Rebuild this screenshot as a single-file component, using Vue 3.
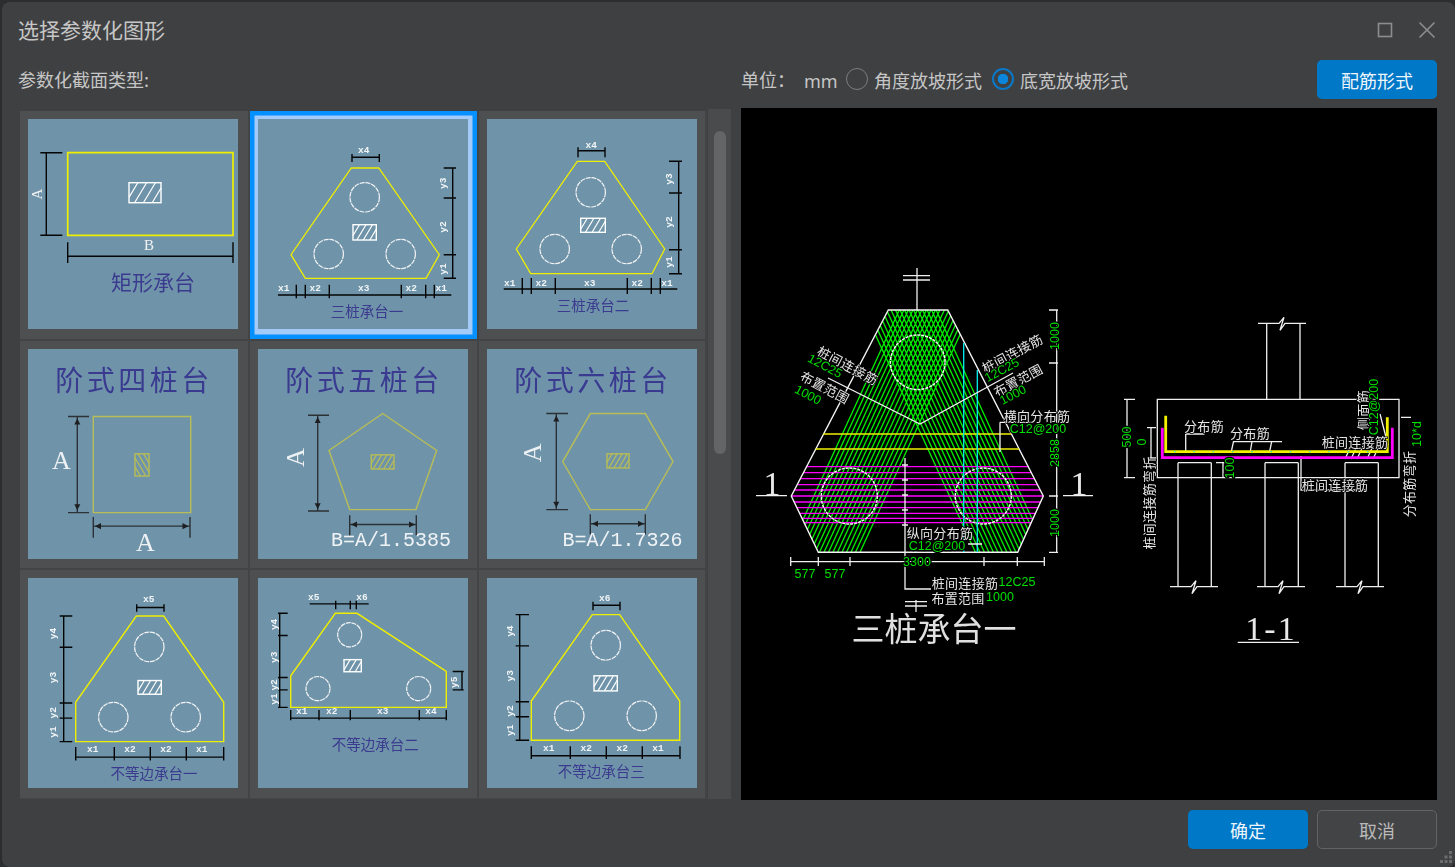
<script setup>
const YEL = '#eeee00'
const OLV = '#b8bd55'
const BLK = '#050505'
const DGR = '#2c3135'
const pts = a => a.map(p => p.join(',')).join(' ')
const hdim = (y, xs, t1, t2, x0, x1) =>
  `M${x0 ?? xs[0]} ${y}H${x1 ?? xs[xs.length - 1]}` + xs.map(x => `M${x} ${t1}V${t2}`).join('')
const vdim = (x, ys, t1, t2) =>
  `M${x} ${ys[0]}V${ys[ys.length - 1]}` + ys.map(y => `M${t1} ${y}H${t2}`).join('')
const hatch = (x, y, w, h, n, back) => {
  let d = ''
  const dx = h * 0.6
  const step = (w + dx) / (n + 1)
  for (let i = 1; i <= n; i++) {
    const s = x - dx + step * i
    let ax = s, ay = y + h, bx = s + dx, by = y
    if (ax < x) { ay = y + h - (x - ax) / 0.6; ax = x }
    if (bx > x + w) { by = y + (bx - x - w) / 0.6; bx = x + w }
    if (back) {
      const ma = 2 * x + w - ax, mb = 2 * x + w - bx
      d += `M${ma} ${ay}L${mb} ${by}`
    } else d += `M${ax} ${ay}L${bx} ${by}`
  }
  return d
}
const arrowsH = (y, a, b) =>
  `M${a} ${y}l6 -3v6zM${b} ${y}l-6 -3v6z`
const arrowsV = (x, a, b) =>
  `M${x} ${a}l-3 6h6zM${x} ${b}l-3 -6h6z`
const small = (x, y, t, rot) => ({ x, y, t, rot, c: 'small' })

const cards = [
  {
    h: 210, poly: [[39.7, 33.7], [205, 33.7], [205, 116.3], [39.7, 116.3]], col: YEL, pw: 1.7,
    hatch: [101, 63.7, 32, 20, 4, false, '#fff'],
    lines: [vdim(18.3, [33.7, 116.3], 12.3, 34.3), hdim(137.3, [39.7, 205], 123.3, 144)],
    texts: [
      { x: 8.5, y: 75, t: 'A', rot: -90, c: 'mid' }, { x: 121, y: 126, t: 'B', c: 'mid' },
      { x: 125, y: 162, t: '矩形承台', c: 'cap big' }
    ]
  },
  {
    h: 210, poly: [[93.3, 49], [120.7, 49], [181.3, 135.7], [168, 159.3], [47.3, 159.3], [33, 135.7]], col: YEL, pw: 1.3,
    circles: [[106.7, 78.3, 14.7], [70.7, 135, 14.7], [142.7, 135, 14.7]],
    hatch: [95, 105.7, 23.3, 15.3, 4, false, '#fff'],
    lines: [hdim(38.3, [94, 121.3], 35, 43), vdim(194.7, [49, 79, 135.7, 159.3], 185.7, 198),
      hdim(176, [38.3, 47.3, 71.3, 143.3, 167.7, 176.3], 165.7, 179.3, 20, 193.3)],
    texts: [small(105.7, 31, 'x4'), small(185.7, 64.3, 'y3', -90), small(185.7, 108, 'y2', -90), small(185.7, 150, 'y1', -90),
      small(25.7, 169, 'x1'), small(57.3, 169, 'x2'), small(105.7, 169, 'x3'), small(153.3, 169, 'x2'), small(183.3, 169, 'x1'),
      { x: 109, y: 191.7, t: '三桩承台一', c: 'cap' }]
  },
  {
    h: 210, poly: [[90.3, 42.3], [117.7, 42.3], [177.7, 130], [165, 154.7], [43.7, 154.7], [29.3, 130]], col: YEL, pw: 1.3,
    circles: [[103.7, 73.3, 14.7], [67.7, 130, 14.7], [139.7, 130, 14.7]],
    hatch: [93.7, 99.3, 24.6, 14, 4, false, '#fff'],
    lines: [hdim(31.7, [91, 118], 28.3, 38.3), vdim(191.7, [42.3, 74, 130.7, 154.7], 182, 195),
      hdim(170, [35.3, 44.3, 68.3, 140.3, 164.3, 173.3], 159, 175, 16.7, 190.3)],
    texts: [small(104.3, 26, 'x4'), small(182.7, 60, 'y3', -90), small(182.7, 103, 'y2', -90), small(182.7, 143, 'y1', -90),
      small(22.7, 164.3, 'x1'), small(54.3, 164.3, 'x2'), small(102.7, 164.3, 'x3'), small(150.3, 164.3, 'x2'), small(180, 164.3, 'x1'),
      { x: 106, y: 185.7, t: '三桩承台二', c: 'cap' }]
  },
  {
    h: 208.3, poly: [[65.3, 67], [162.7, 67], [162.7, 162.3], [65.3, 162.3]], col: OLV, pw: 1.4, dim: DGR,
    hatch: [107, 104, 14, 22, 4, true, OLV],
    lines: [vdim(49.3, [67, 162.3], 40, 61), hdim(175.7, [65.3, 162], 166.7, 187.3)],
    fills: arrowsV(49.3, 69, 160) + arrowsH(175.7, 67, 160.5),
    texts: [{ x: 106, y: 28.8, t: '阶式四桩台', c: 'cap head' }, { x: 33.3, y: 111, t: 'A', c: 'large' }, { x: 117.3, y: 191.7, t: 'A', c: 'large' }]
  },
  {
    h: 208.3, poly: [[124.7, 64], [178.7, 100.7], [158, 159.3], [91.7, 159.3], [71, 100.7]], col: OLV, pw: 1.4, dim: DGR,
    hatch: [113.3, 105, 22.7, 14, 5, false, OLV],
    lines: [vdim(59.7, [65.7, 160.7], 50, 71), hdim(174, [91.7, 158.3], 165, 185)],
    fills: arrowsV(59.7, 67.5, 159) + arrowsH(174, 93, 157),
    texts: [{ x: 106, y: 28.8, t: '阶式五桩台', c: 'cap head' }, { x: 37.3, y: 107.7, t: 'A', rot: -90, c: 'large' }, { x: 133, y: 190, t: 'B=A/1.5385', c: 'mono' }]
  },
  {
    h: 208.3, poly: [[103.3, 64], [158.3, 64], [186, 111.7], [158.3, 159.3], [103.3, 159.3], [75.7, 111.7]], col: OLV, pw: 1.4, dim: DGR,
    hatch: [120, 104, 22, 14, 5, false, OLV],
    lines: [vdim(69.3, [64, 159.3], 59.3, 81), hdim(173.3, [103.3, 158.3], 164, 184)],
    fills: arrowsV(69.3, 66, 157.5) + arrowsH(173.3, 105, 157),
    texts: [{ x: 106, y: 28.8, t: '阶式六桩台', c: 'cap head' }, { x: 46, y: 103, t: 'A', rot: -90, c: 'large' }, { x: 135.5, y: 190, t: 'B=A/1.7326', c: 'mono' }]
  },
  {
    h: 208.3, poly: [[108.3, 37.7], [135.7, 37.7], [195.7, 123.3], [195.7, 162.3], [47.7, 162.3], [47.7, 123.3]], col: YEL, pw: 1.4,
    circles: [[121.3, 68.3, 14.7], [85.3, 138, 14.7], [157.7, 138, 14.7]],
    hatch: [110, 101.7, 23.3, 13.6, 4, false, '#fff'],
    lines: [hdim(29.3, [108.7, 136], 26, 33.5), vdim(35.7, [37.7, 68.7, 124, 139, 162.3], 31.7, 44.3),
      hdim(177.7, [47.7, 86.3, 122.3, 158.3, 195.7], 167.7, 181)],
    texts: [small(120.7, 21.7, 'x5'), small(26, 55, 'y4', -90), small(26, 98.7, 'y3', -90), small(26, 133.7, 'y2', -90), small(26, 152.7, 'y1', -90),
      small(64.7, 170.3, 'x1'), small(102, 170.3, 'x2'), small(138, 170.3, 'x2'), small(173.7, 170.3, 'x1'),
      { x: 126, y: 192.7, t: '不等边承台一', c: 'cap' }]
  },
  {
    h: 208.3, poly: [[77.3, 35], [99, 35], [188.3, 92.7], [188.3, 128.3], [32.7, 128.3], [32.7, 97]], col: YEL, pw: 1.4,
    circles: [[91.7, 56.3, 12], [60, 109.7, 12], [160.7, 109.7, 12]],
    hatch: [86, 81, 17.3, 12, 3, false, '#fff'],
    lines: [hdim(25.7, [77.7, 92.3, 98.3], 22.5, 31, 51.7, 110.7), vdim(21.7, [35, 57, 98.7, 111, 128.3], 20, 29.7),
      vdim(204, [92.7, 111], 194.7, 205.7), hdim(139, [32.7, 61, 92.3, 161.3, 188.3], 131, 141)],
    texts: [small(55.7, 19.3, 'x5'), small(104, 19.3, 'x6'), small(16.3, 46, 'y4', -90), small(16.3, 78.7, 'y3', -90), small(16.3, 106, 'y2', -90), small(16.3, 120, 'y1', -90),
      small(196.3, 103.3, 'y5', -90), small(43.7, 132.3, 'x1'), small(73.7, 132.3, 'x2'), small(124.7, 132.3, 'x3'), small(173, 132.3, 'x4'),
      { x: 117.3, y: 163.7, t: '不等边承台二', c: 'cap' }]
  },
  {
    h: 208.3, poly: [[105.3, 36.3], [132.7, 36.3], [192.7, 122], [192.7, 161], [44.3, 161], [44.3, 122]], col: YEL, pw: 1.4,
    circles: [[118.7, 66.7, 14.7], [82.3, 136.7, 14.7], [154.7, 136.7, 14.7]],
    hatch: [107, 97, 23.3, 15, 4, false, '#fff'],
    lines: [hdim(27, [106, 133], 23.5, 32), vdim(32.7, [36.3, 67.3, 122.7, 137.7, 161], 28.7, 42),
      hdim(176.3, [44.3, 83.3, 119.3, 155.3, 193], 167, 179.5)],
    texts: [small(117.7, 20, 'x6'), small(23.7, 52.7, 'y4', -90), small(23.7, 97, 'y3', -90), small(23.7, 132, 'y2', -90), small(23.7, 151, 'y1', -90),
      small(61.7, 169, 'x1'), small(99.3, 169, 'x2'), small(135.3, 169, 'x2'), small(171, 169, 'x1'),
      { x: 114.3, y: 191, t: '不等边承台三', c: 'cap' }]
  }
].map((c, i) => {
  const [x, y, w, h, n, back, col] = c.hatch
  return { ...c, id: i, hatchBox: { x, y, w, h, col }, hatchD: hatch(x, y, w, h, n, back) }
})

const rot = t => (t.rot ? `rotate(${t.rot} ${t.x} ${t.y})` : undefined)

// Preview drawing, in page coordinates
const hexPts = '888.3,310 947.7,310 1043.3,496 1017.7,552.3 818.3,552.3 791.3,496'
const greens = []
for (let i = 0; i < 17; i++) {
  const xa = 788 + i * 4.5
  greens.push(`M${xa} 552.3L${xa + 0.46 * 260} 292`)
  const xb = 1835.4 - xa
  greens.push(`M${xb} 552.3L${xb - 0.46 * 260} 292`)
}
const greenD = greens.join('')
const magentaYs = [466.7, 472.7, 478.7, 484.7, 490, 496, 502, 507.7, 513.3, 518.3, 522.7]
const magentaD = magentaYs.map(y => `M780 ${y}H1050`).join('')
const leaderDots = [465, 480, 495, 510, 525].map(y => `M902 ${y}h6`).join('')
const bk = (x, y) => `M${x - 24} ${y}H${x - 3}l5 -6l-4 13l5 -7H${x + 24}`

const pvLabels = [
  { x: 848, y: 365, t: '桩间连接筋', rot: 28, c: 'pw' },
  { x: 825, y: 366, t: '12C25', rot: 28, c: 'pg' },
  { x: 825, y: 387, t: '布置范围', rot: 28, c: 'pw' },
  { x: 808, y: 395, t: '1000', rot: 28, c: 'pg' },
  { x: 1012, y: 353, t: '桩间连接筋', rot: -28, c: 'pw' },
  { x: 1002, y: 370, t: '12C25', rot: -28, c: 'pg' },
  { x: 1018, y: 380, t: '布置范围', rot: -28, c: 'pw' },
  { x: 1013, y: 395, t: '1000', rot: -28, c: 'pg' },
  { x: 1037, y: 415, t: '横向分布筋', c: 'pw' },
  { x: 1038, y: 429, t: 'C12@200', c: 'pg' },
  { x: 940, y: 532, t: '纵向分布筋', c: 'pw' },
  { x: 937, y: 546, t: 'C12@200', c: 'pg' },
  { x: 1055, y: 336, t: '1000', rot: -90, c: 'pg' },
  { x: 1055, y: 453, t: '2858', rot: -90, c: 'pg' },
  { x: 1055, y: 523, t: '1000', rot: -90, c: 'pg' },
  { x: 917, y: 562, t: '3300', c: 'pg' },
  { x: 805, y: 573.5, t: '577', c: 'pg' },
  { x: 835, y: 573.5, t: '577', c: 'pg' },
  { x: 965, y: 582, t: '桩间连接筋', c: 'pw' },
  { x: 1017, y: 582, t: '12C25', c: 'pg' },
  { x: 958, y: 597, t: '布置范围', c: 'pw' },
  { x: 1000, y: 597, t: '1000', c: 'pg' },
  { x: 934, y: 627, t: '三桩承台一', c: 'ptitle' },
  { x: 772, y: 483, t: '1', c: 'pone' },
  { x: 1079, y: 483, t: '1', c: 'pone' },
  { x: 1204, y: 425, t: '分布筋', c: 'pw' },
  { x: 1250, y: 432, t: '分布筋', c: 'pw' },
  { x: 1355, y: 441, t: '桩间连接筋', c: 'pw' },
  { x: 1335, y: 484, t: '桩间连接筋', c: 'pw' },
  { x: 1362, y: 410, t: '侧面筋', rot: -90, c: 'pw' },
  { x: 1374, y: 407, t: 'C12@200', rot: -90, c: 'pg' },
  { x: 1127, y: 437, t: '500', rot: -90, c: 'pg' },
  { x: 1142, y: 442, t: '0', rot: -90, c: 'pg' },
  { x: 1230, y: 468, t: '100', rot: -90, c: 'pg' },
  { x: 1417, y: 434, t: '10*d', rot: -90, c: 'pg' },
  { x: 1148, y: 503, t: '桩间连接筋弯折', rot: -90, c: 'pw' },
  { x: 1408, y: 484, t: '分布筋弯折', rot: -90, c: 'pw' },
  { x: 1271, y: 628, t: '1-1', c: 'pone wide' }
]
const whiteD = [
  'M917 268V310M903 275.7H930M903 280H930',
  'M905 601.7H927M905 606H927M916 600V612',
  'M756 495.7H787M1063 495.7H1093',
  'M1056.7 310V552.3M1049 310H1058M1049 363H1058M1049 496H1058M1049 552.3H1058',
  'M790.7 561.7H1044.3M790.7 557V566M818.3 557V566M850 557V566M984 557V566M1017.3 557V566M1044.3 557V566',
  'M828 378L920 424L1013 373',
  'M1000 422.3H1032M1000 422.3V452',
  'M905 458V589H931',
  leaderDots,
  'M968 544H982',
  bk(1282, 323.3),
  'M1266.7 323.3V399.3M1300 323.3V399.3',
  'M1157.3 399.3H1399V477.7H1157.3Z',
  'M1178 462.7H1211.3M1178 462.7V586.7M1211.3 462.7V586.7',
  'M1265 462.7H1298.3M1265 462.7V586.7M1298.3 462.7V586.7',
  'M1345 462.7H1378.3M1345 462.7V586.7M1378.3 462.7V586.7',
  bk(1194, 586.7), bk(1281, 586.7), bk(1360, 586.7),
  'M1127 399.3V477.7M1124 399.3H1135M1124 477.7H1135',
  'M1151 427.7V458M1147 427.7H1156M1147 458H1156',
  'M1223 462.7V477.7M1216 462.7H1227M1216 477.7H1227',
  'M1185.7 453V434H1204.5',
  'M1231 453L1233.5 441.7H1282M1250 453L1252 441.7M1269.3 453L1271.7 441.7',
  'M1301 456V490H1367',
  'M1345 459L1351 446M1351 459L1357 446M1357 459L1363 446M1367 459L1373 446M1373 459L1379 446',
  'M1380 414L1388 445',
  'M1401 417.3H1411',
  'M1237.7 642.3H1299'
].join('')
const cyanDots = []
for (let x = 1174; x < 1384; x += 19.3) cyanDots.push(`M${x} 451.7h1.5`)
const cyanD = cyanDots.join('')
</script>

<template>
  <div class="win">
    <header class="title">
      <span>选择参数化图形</span>
      <div class="ctrls">
        <svg class="ctl" width="16" height="16" viewBox="0 0 16 16"><rect x="1.5" y="1.5" width="13" height="13" /></svg>
        <svg class="ctl" width="18" height="18" viewBox="0 0 18 18"><path d="M1.5 1.5L16.5 16.5M16.5 1.5L1.5 16.5" /></svg>
      </div>
    </header>

    <section class="tools">
      <div class="lbl">参数化截面类型:</div>
      <div class="opts">
        <span class="unit">单位：</span>
        <span class="mm">mm</span>
        <label class="radio"><i class="dot"></i>角度放坡形式</label>
        <label class="radio on"><i class="dot"></i>底宽放坡形式</label>
        <button class="btn primary push">配筋形式</button>
      </div>
    </section>

    <main class="body">
      <div class="panel">
        <div class="grid">
          <div v-for="c in cards" :key="c.id" class="cell" :class="{ sel: c.id === 1 }">
            <div class="card">
              <svg class="art" width="210" height="210" :viewBox="`0 0 210 ${c.h}`" preserveAspectRatio="none">
                <polygon :points="pts(c.poly)" fill="none" :stroke="c.col" :stroke-width="c.pw" />
                <circle v-for="(o, i) in c.circles || []" :key="i" :cx="o[0]" :cy="o[1]" :r="o[2]" class="pile" />
                <rect :x="c.hatchBox.x" :y="c.hatchBox.y" :width="c.hatchBox.w" :height="c.hatchBox.h" fill="none" :stroke="c.hatchBox.col" stroke-width="1.4" />
                <path :d="c.hatchD" fill="none" :stroke="c.hatchBox.col" stroke-width="1.2" />
                <path v-for="(d, i) in c.lines" :key="i" :d="d" fill="none" :stroke="c.dim || BLK" stroke-width="1.4" />
                <path v-if="c.fills" :d="c.fills" fill="#1d1f20" />
                <text v-for="(t, i) in c.texts" :key="i" :x="t.x" :y="t.y" :transform="rot(t)" class="tx" :class="t.c" text-anchor="middle" dominant-baseline="central">{{ t.t }}</text>
              </svg>
            </div>
          </div>
        </div>
        <div class="track"><div class="thumb"></div></div>
      </div>

      <div class="preview">
        <svg class="art" width="696" height="692" viewBox="741 108 696 692">
          <defs>
            <clipPath id="hexclip"><polygon :points="hexPts" /></clipPath>
          </defs>
          <g clip-path="url(#hexclip)">
            <path :d="greenD" fill="none" stroke="#00f000" stroke-width="1.3" />
            <path :d="magentaD" fill="none" stroke="#ff00ff" stroke-width="1.3" />
          </g>
          <polygon :points="hexPts" fill="none" stroke="#f4f4f4" stroke-width="1.4" />
          <circle cx="917.7" cy="362.3" r="27.3" class="pile pv" />
          <circle cx="849.3" cy="496" r="28" class="pile pv" />
          <circle cx="983.3" cy="496" r="28" class="pile pv" />
          <path d="M823.3 434H1011M815.7 449H1019" stroke="#f0f000" stroke-width="1.6" fill="none" />
          <path d="M963.7 343V552M977.3 370V552" stroke="#00f0f0" stroke-width="1.3" fill="none" />
          <path :d="whiteD" fill="none" stroke="#f0f0f0" stroke-width="1.3" />
          <path d="M1162.3 427.7V457.7H1392.3V427.7" fill="none" stroke="#ff00ff" stroke-width="2.8" />
          <path d="M1165.7 415.7V451.7H1387.3V417.3" fill="none" stroke="#f2f200" stroke-width="2.8" />
          <path :d="cyanD" fill="none" stroke="#00e0e0" stroke-width="1" />
          <text v-for="(t, i) in pvLabels" :key="i" :x="t.x" :y="t.y" :transform="rot(t)" class="tx" :class="t.c" text-anchor="middle" dominant-baseline="central">{{ t.t }}</text>
        </svg>
      </div>
    </main>

    <footer class="foot">
      <button class="btn primary">确定</button>
      <button class="btn ghost">取消</button>
    </footer>

    <svg class="grip" width="14" height="14" viewBox="0 0 14 14">
      <path d="M10 1h3v3h-3zM5.5 5.5h3v3h-3zM10 5.5h3v3h-3zM1 10h3v3H1zM5.5 10h3v3h-3zM10 10h3v3h-3z" />
    </svg>
  </div>
</template>

<style>
html, body { margin: 0; background: #2c2d2f; overflow: hidden; }
</style>

<style scoped>
.win {
  position: relative;
  box-sizing: border-box;
  width: 1453px;
  height: 865px;
  margin: 2px 0 0 2px;
  padding: 0 18px;
  background: #3f4042;
  border-radius: 8px;
  display: flex;
  flex-direction: column;
  overflow: hidden;
  color: #c6c6c6;
  font-family: "Noto Sans CJK SC", "Noto Sans", sans-serif;
}
.title {
  height: 58px;
  flex: none;
  display: flex;
  align-items: center;
  justify-content: space-between;
  font-size: 21px;
  padding-bottom: 4px;
  box-sizing: border-box;
  margin-left: -2px;
}
.ctrls { display: flex; align-items: center; gap: 25px; margin: 2px 1px 0 0; }
.ctl { fill: none; stroke: #8d8d8d; stroke-width: 1.6; display: block; }
.tools {
  height: 39px;
  flex: none;
  display: grid;
  grid-template-columns: 711px 696px;
  column-gap: 10px;
  align-items: center;
}
.lbl { font-size: 18px; margin-left: -2px; line-height: 1; padding-bottom: 2px; }
.opts { display: flex; align-items: center; font-size: 18px; line-height: 1; }
.unit { width: 63px; flex: none; white-space: nowrap; padding-bottom: 2px; }
.mm { width: 42px; flex: none; font-size: 18px; font-family: "Noto Sans", sans-serif; padding-top: 2px; }
.radio { display: flex; align-items: center; gap: 6px; margin-right: 10px; }
.dot {
  box-sizing: border-box;
  width: 22px;
  height: 22px;
  border-radius: 50%;
  border: 1.5px solid #7c7d7f;
  display: block;
  margin-top: -2px;
}
.on .dot { border: 2px solid #0a78c6; background: radial-gradient(circle, #0a86dc 0 5px, transparent 5.5px); }
.btn {
  width: 120px;
  height: 39px;
  box-sizing: border-box;
  border-radius: 5px;
  border: 0;
  font: inherit;
  font-size: 18px;
  padding: 0;
  display: block;
}
.primary { background: #0078c8; color: #eef6fc; }
.ghost { background: #434446; border: 1.5px solid #626365; color: #b9b9b9; }
.push { margin-left: auto; }
.body {
  margin-top: 9px;
  height: 692px;
  flex: none;
  display: grid;
  grid-template-columns: 711px 696px;
  column-gap: 10px;
}
.panel { display: flex; height: 690px; margin-top: 1px; }
.grid {
  width: 687px;
  height: 688px;
  margin-top: 2px;
  display: grid;
  grid-template-columns: 229.5px 229.5px 228px;
  grid-auto-rows: 229.5px;
  background: #4e4f51;
  overflow: hidden;
  border-bottom: 1px solid #454648;
  box-sizing: border-box;
}
.cell {
  box-sizing: border-box;
  padding: 8px 0 0 8.3px;
  border-right: 2px solid #434446;
  border-bottom: 2px solid #434446;
}
.cell.sel {
  background: #a3cbf9;
  box-shadow: inset 0 0 0 4.5px #0590ff;
}
.card { width: 210px; height: 210px; background: #6f94aa; }
.art { display: block; filter: blur(0.3px); }
.track { width: 24px; height: 690px; background: #4a4b4d; position: relative; border-left: 1px solid #3f4042; box-sizing: border-box; }
.thumb { position: absolute; left: 6px; top: 22px; width: 12px; height: 323px; border-radius: 6px; background: #646567; }
.preview { background: #000; height: 692px; overflow: hidden; }
.foot { margin-top: 10px; display: flex; justify-content: flex-end; gap: 9px; }
.grip { position: absolute; right: 2px; bottom: 3px; fill: #6b6c6e; }
.pile { fill: none; stroke: #f4f4f4; stroke-width: 1.2; stroke-dasharray: 5 0.8; }
.pile.pv { stroke-width: 1.4; stroke-dasharray: 3 1; }
.tx { font-family: "Noto Sans CJK SC", "Noto Sans", sans-serif; }
.small { font-family: "Liberation Mono", monospace; font-weight: 700; font-size: 9.5px; fill: #f2f5f6; }
.mid { font-family: "Liberation Serif", serif; font-size: 15px; fill: #f2f2f2; }
.large { font-family: "Liberation Serif", serif; font-size: 26px; fill: #eef1f3; }
.mono { font-family: "Liberation Mono", monospace; font-size: 20px; fill: #f0f3f5; }
.cap { font-size: 14.5px; fill: #3b3a8e; }
.big { font-size: 21px; }
.head { font-size: 28px; letter-spacing: 3.5px; fill: #3a3a90; }
.pw { font-size: 13px; fill: #e6e6e6; letter-spacing: .3px; paint-order: stroke; stroke: #000; stroke-width: 1.5px; }
.pg { font-family: "Liberation Sans", sans-serif; font-size: 12.5px; fill: #00e000; paint-order: stroke; stroke: #000; stroke-width: 2.5px; }
.ptitle { font-size: 33px; fill: #e0e0e0; }
.pone { font-family: "Liberation Serif", serif; font-size: 34px; fill: #e8e8e8; }
.wide { letter-spacing: 2px; }
</style>
